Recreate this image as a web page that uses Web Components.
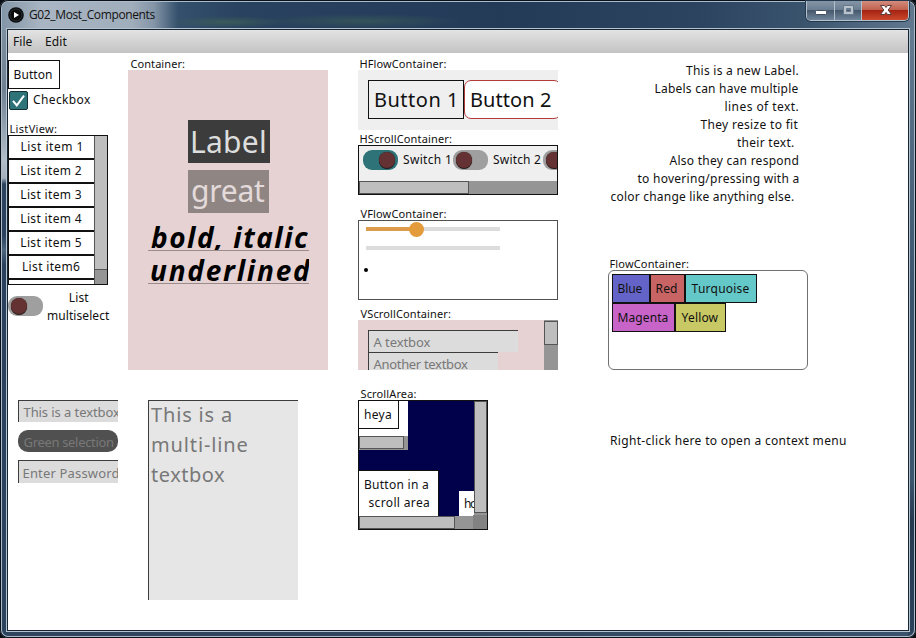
<!DOCTYPE html>
<html lang="en">
<head>
<meta charset="utf-8">
<title>G02_Most_Components</title>
<style>
html,body{margin:0;width:916px;height:638px;overflow:hidden;background:#0b0d14}
body{font-family:"Noto Sans","Open Sans",sans-serif;font-size:12px;color:#111}
.cols{display:grid;grid-template-columns:120px 230px 250px 300px;height:577px}
.col{display:flex;flex-direction:column;align-items:flex-start}
.row{display:flex;align-items:flex-start}
.center{display:flex;flex-direction:column;align-items:center}
.end{display:flex;flex-direction:column;align-items:flex-end}
.clip{overflow:hidden;box-sizing:border-box}
</style>
</head>
<body>
<ui-window>
  <ui-menubar slot="menu"><ui-text w="18.5">File</ui-text><ui-text w="21.5">Edit</ui-text></ui-menubar>
  <div class="cols">
    <div class="col" style="padding-top:7px">
      <ui-button style="width:52px;height:29px"><ui-text w="37.5">Button</ui-text></ui-button>
      <ui-checkbox style="margin:2px 0 0 1px"><ui-text w="58">Checkbox</ui-text></ui-checkbox>
      <ui-group label="ListView:" lw="46.5" style="margin-top:11px">
        <ui-list>
          <ui-text w="60">List item 1</ui-text><ui-text w="60.5">List item 2</ui-text><ui-text w="60.5">List item 3</ui-text><ui-text w="60.5">List item 4</ui-text><ui-text w="60.5">List item 5</ui-text><ui-text w="57">List item6</ui-text>
        </ui-list>
      </ui-group>
      <div class="row" style="margin-top:4px;gap:5px">
        <ui-switch style="margin-top:7px"></ui-switch>
        <div class="center" style="gap:1px"><ui-text w="19.5" style="margin-left:1px">List</ui-text><ui-text w="62">multiselect</ui-text></div>
      </div>
      <ui-textbox style="width:100px;height:22px;margin:76px 0 0 10px"><ui-text fs="13" w="96.5">This is a textbox</ui-text></ui-textbox>
      <ui-textbox dark style="width:100px;height:22px;margin:8px 0 0 10px"><ui-text fs="13" w="89.5">Green selection</ui-text></ui-textbox>
      <ui-textbox style="width:100px;height:23px;margin:8px 0 0 10px;padding-top:3px"><ui-text fs="13" w="95">Enter Password</ui-text></ui-textbox>
    </div>

    <div class="col" style="padding-top:3px">
      <ui-group label="Container:" lw="54.5">
        <div class="col clip" style="width:200px;height:300px;background:#e6d2d2;padding:50px 0 0 60px">
          <ui-label style="width:82px;background:#3c3c3c;color:#dcdedd"><ui-text fs="30" w="73">Label</ui-text></ui-label>
          <ui-label style="width:81px;background:#8f8684;color:#e4dada;margin-top:7px;padding-top:0"><ui-text fs="30" w="73">great</ui-text></ui-label>
          <ui-underline style="margin:5px 0 0 -40px"><ui-text fs="28" w="157">bold, italic</ui-text></ui-underline>
          <ui-underline style="margin-left:-40px"><ui-text fs="28" w="160">underlined</ui-text></ui-underline>
        </div>
      </ui-group>
      <ui-textbox style="width:150px;height:200px;margin:30px 0 0 20px;background:#e6e6e6;padding:0 0 0 2px">
        <div class="col" style="gap:3px"><ui-text fs="20" w="80">This is a</ui-text><ui-text fs="20" w="95.5" style="margin-left:1px">multi-line</ui-text><ui-text fs="20" w="74">textbox</ui-text></div>
      </ui-textbox>
    </div>

    <div class="col" style="padding-top:3px">
      <ui-group label="HFlowContainer:" lw="86">
        <div class="row clip" style="width:200px;height:60px;background:#efefef;padding:10px 0 0 10px">
          <ui-button style="width:96px;height:39px;flex:none;background:transparent;padding:5px 0 0 6px"><ui-text fs="20" w="80">Button 1</ui-text></ui-button>
          <ui-button style="width:97px;height:39px;flex:none;padding:5px 0 0 6px;border-color:#b23b3b;border-radius:7px"><ui-text fs="20" w="80">Button 2</ui-text></ui-button>
        </div>
      </ui-group>
      <ui-group label="HScrollContainer:" lw="91.5" style="margin-top:1px">
        <div class="col clip" style="width:200px;height:50px;background:#efefef;border:1px solid #111">
          <div class="row" style="height:31px;margin-top:4px;margin-left:4px">
            <ui-switch on></ui-switch><ui-text w="47" style="margin:1px 3px 0 5px">Switch 1</ui-text>
            <ui-switch></ui-switch><ui-text w="48" style="margin:1px 2px 0 5px">Switch 2</ui-text>
            <ui-switch></ui-switch>
          </div>
          <ui-scrollbar style="width:198px;height:13px;--w:108px;--h:11px"></ui-scrollbar>
        </div>
      </ui-group>
      <ui-group label="VFlowContainer:" lw="86" style="margin-top:11px">
        <div class="col clip" style="width:200px;height:80px;border:1px solid #505050;padding-left:7px">
          <ui-slider style="--v:50px"></ui-slider>
          <ui-slider empty style="margin-top:3px"></ui-slider>
          <div style="width:4px;height:4px;border-radius:2px;background:#000;margin:12px 0 0 -2px"></div>
        </div>
      </ui-group>
      <ui-group label="VScrollContainer:" lw="90.5" style="margin-top:6px">
        <div class="row clip" style="width:200px;height:50px;background:#e6d2d2">
          <div class="col" style="width:186px;padding:10px 0 0 10px;box-sizing:border-box">
            <ui-textbox style="width:150px;height:22px"><ui-text fs="13" w="57">A textbox</ui-text></ui-textbox>
            <ui-textbox style="width:130px;height:22px"><ui-text fs="13" w="94.5">Another textbox</ui-text></ui-textbox>
          </div>
          <ui-scrollbar style="width:14px;height:50px;padding-top:1px;--w:12px;--h:22px"></ui-scrollbar>
        </div>
      </ui-group>
      <ui-group label="ScrollArea:" lw="56" style="margin-top:16px">
        <ui-scrollarea>
          <div class="col clip" style="width:49px;height:49px;background:#fff">
            <div class="clip" style="width:40px;height:28px;flex:none;border:solid #111;border-width:0 1px 1px 0;padding:5px 0 0 6px;margin-bottom:7px"><ui-text w="26">heya</ui-text></div>
            <ui-scrollbar style="width:49px;height:14px;--w:43px;--h:11px"></ui-scrollbar>
          </div>
          <div class="row" style="justify-content:space-between;margin-top:20px">
            <div class="col clip" style="width:80px;height:46px;background:#fff;border-right:1px solid #111;border-top:1px solid #111;padding:5px 0 0 6px;gap:1px">
              <ui-text w="63">Button in a</ui-text><ui-text w="60.5" style="margin-left:3.5px">scroll area</ui-text>
            </div>
            <div class="clip" style="width:15px;height:25px;background:#fff;margin-top:21px;padding:4px 0 0 6px"><ui-text w="21">hoya</ui-text></div>
          </div>
        </ui-scrollarea>
      </ui-group>
    </div>

    <div class="col" style="padding-top:9px">
      <div class="end" style="width:190.5px;gap:1px">
        <ui-text w="112.5">This is a new Label.</ui-text>
        <ui-text w="143">Labels can have multiple</ui-text>
        <ui-text w="73">lines of text.</ui-text>
        <ui-text w="98">They resize to fit</ui-text>
        <ui-text w="57" style="margin-right:4.500px">their text.</ui-text>
        <ui-text w="129">Also they can respond</ui-text>
        <ui-text w="161">to hovering/pressing with a</ui-text>
        <ui-text w="183.5" style="margin-right:4.500px">color change like anything else.</ui-text>
      </div>
      <ui-group label="FlowContainer:" lw="78.5" style="margin-top:51px">
        <div class="row clip" style="width:200px;height:100px;border:1px solid #707070;border-radius:6px;padding:3px;flex-wrap:wrap;align-content:flex-start">
          <ui-button style="width:38px;height:29px;background:#6464c8"><ui-text w="24">Blue</ui-text></ui-button>
          <ui-button style="width:35px;height:29px;background:#c86464"><ui-text w="20.5">Red</ui-text></ui-button>
          <ui-button style="width:72px;height:29px;background:#64c8c8"><ui-text w="58">Turquoise</ui-text></ui-button>
          <ui-button style="width:63px;height:29px;background:#c864c8"><ui-text w="49">Magenta</ui-text></ui-button>
          <ui-button style="width:51px;height:29px;background:#c8c864"><ui-text w="37">Yellow</ui-text></ui-button>
        </div>
      </ui-group>
      <ui-text w="235" style="margin:62px 0 0 3px">Right-click here to open a context menu</ui-text>
    </div>
  </div>
</ui-window>

<script>
const define = (name, html, init) => customElements.define(name, class extends HTMLElement {
  connectedCallback() {
    if (this.shadowRoot) return;
    const t = document.createElement('template');
    t.innerHTML = html;
    this.attachShadow({mode: 'open'}).append(t.content.cloneNode(true));
    if (init) init(this, this.shadowRoot);
  }
});

define('ui-group', `<style>:host{display:block;flex:none}.l{height:14px;padding-left:2.5px}</style><div class="l"></div><slot></slot>`, (el, root) => {
  const t = document.createElement('ui-text');
  t.setAttribute('fs', 11);
  t.setAttribute('w', el.getAttribute('lw'));
  t.textContent = el.getAttribute('label');
  root.querySelector('.l').append(t);
});

define('ui-button', `<style>:host{display:block;box-sizing:border-box;border:1px solid #111;background:#fff;padding:5px 0 0 5.6px;color:#111}</style><slot></slot>`);

define('ui-checkbox', `<style>:host{display:flex;gap:5px}i{width:19px;height:19px;box-sizing:border-box;border:1px solid #142f33;border-radius:2px;background:#2d7378}svg{display:block}</style>
<i><svg width="17" height="17" viewBox="0 0 17 17"><path d="M3 8.800 L6.8 13.400 L14 3.600" fill="none" stroke="#fff" stroke-width="2"/></svg></i><slot></slot>`);

define('ui-scrollbar', `<style>:host{display:block;flex:none;box-sizing:border-box;background:#959595}i{display:block;box-sizing:content-box;width:var(--w);height:var(--h);background:#bebebe;border:1px solid #555}</style><i></i>`);

define('ui-list', `<style>:host{display:flex;box-sizing:border-box;width:100px;height:150px;border:1px solid #111;overflow:hidden}
.items{width:85px;flex:none}.it{height:24px;box-sizing:border-box;border-bottom:2px solid #111;display:flex;justify-content:center;padding-top:2px}
.b{width:13px;height:148px;background:#959595;border-left:1px solid #555}.b i{display:block;height:133px;background:#bebebe;border-bottom:1px solid #555}</style>
<div class="items"></div><div class="b"><i></i></div>`, (el, root) => {
  const box = root.querySelector('.items');
  [...el.children].forEach(c => {
    const d = document.createElement('div');
    d.className = 'it';
    d.append(c);
    box.append(d);
  });
});

define('ui-switch', `<style>:host{display:block;flex:none;width:35px;height:20px;border-radius:9px;background:#a09f9f}
:host([on]){background:#2d7378}i{display:block;box-sizing:border-box;width:16px;height:16px;border-radius:50%;background:#643232;box-shadow:0 1px 0 #231818,0 0 1px #231818;transform:translate(3px,2px)}:host([on]) i{transform:translate(16px,2px)}</style><i></i>`);

define('ui-slider', `<style>:host{display:flex;align-items:center;width:134px;height:16px}.a{width:var(--v,0px);height:4px;background:#dc9c4b}.b{flex:1;height:4px;background:#dcdcdc}
.k{width:15px;height:15px;border-radius:50%;background:#e39b3c;margin:0 -7.5px;position:relative}:host([empty]) .k{display:none}</style><div class="a"></div><div class="k"></div><div class="b"></div>`);

define('ui-textbox', `<style>:host{display:block;box-sizing:border-box;overflow:hidden;background:#dcdcdc;border:solid #3c3c3c;border-width:1px 0 0 1px;padding:2px 0 0 4.5px;color:#787878}
:host([dark]){background:#505050;border-color:#505050;border-radius:10px}</style><slot></slot>`);

define('ui-label', `<style>:host{display:block;box-sizing:border-box;height:43px;padding:1px 0 0 4px}</style><slot></slot>`);

define('ui-underline', `<style>:host{display:block;box-sizing:border-box;width:161px;height:33px;overflow:hidden;border-bottom:1px solid #9b8c8c;padding-left:3px;font-weight:bold;font-style:italic;color:#000}</style><slot></slot>`);

define('ui-scrollarea', `<style>:host{display:grid;box-sizing:border-box;width:130px;height:130px;border:1px solid #111;grid-template-columns:115px 13px;grid-template-rows:115px 13px;background:#00004b}
.v{overflow:hidden}.c{background:#828282;margin:-1px 0 0 -1px}</style>
<div class="v"><slot></slot></div><ui-scrollbar style="height:115px;--w:11px;--h:110px"></ui-scrollbar><ui-scrollbar style="--w:94px;--h:11px"></ui-scrollbar><div class="c"></div>`);

define('ui-menubar', `<style>:host{display:flex;gap:13.5px;height:23px;box-sizing:border-box;padding:3px 0 0 6px;background:linear-gradient(#e3e3e3,#c3c3c3)}</style><slot></slot>`);

define('ui-window', `<style>
:host{display:grid;grid-template-rows:30px 600px;box-sizing:border-box;width:916px;height:638px;padding:0 8px 8px;border-radius:8px;overflow:hidden;
background:linear-gradient(#8595a5 0,#6f8193 90px,#b4bec8 160px,#a3afbb 178px,#2d435e 184px,#2b415d 235px,#4c647c 250px,#2b415d 265px,#2d435e 100%) 0 0/8px 100% no-repeat,
linear-gradient(#6f8498 0,#5f768c 60px,#3a526c 300px,#3c546d 480px,#26394f 520px,#2c435c 100%) 100% 0/8px 100% no-repeat,
linear-gradient(90deg,#31465e 0 50%,#3a526c 100%);
box-shadow:inset 0 0 0 1px #0c1018,inset 0 0 0 2px #a9bccb}
:host::before{content:none}
.title{display:flex;align-items:flex-start;margin:2px -6px 0;height:28px;padding-left:6px;border-radius:6px 6px 0 0;
background:radial-gradient(ellipse 60px 6px at 225px 20px,#3d6058cc,transparent),radial-gradient(ellipse 100px 7px at 360px 19px,#3d605899,transparent),linear-gradient(90deg,#8396a8 0,#a9b5c2 40px,#a0adbb 130px,#8495a7 152px,#34506c 176px,#29425f 240px,#243b58 500px,#2c4460 700px,#3a536d 800px,#61788f 100%)}
.logo{margin-top:5px;flex:none}
.name{margin:4px 0 0 5px;font-family:"Open Sans",sans-serif;flex:1}
.ctl{display:flex;margin:-1px 5px 0 0;height:19px;border:1px solid #b5c2ce;border-top:0;border-radius:0 0 5px 5px;overflow:hidden;box-shadow:0 0 0 1px #24384e}
.ctl svg{display:block}.ctl div{background:linear-gradient(#8495a6,#6a7d91 48%,#46586c 50%,#71869b);border-right:1px solid #b3c0cc}
.ctl .x{background:linear-gradient(#d28c7d,#c05f4d 48%,#a52312 50%,#cb4a2c);border:0}
.client{background:#fff;box-shadow:0 0 0 1px #172431,0 0 0 2px #b3c3d0;position:relative}
</style>
<div class="title">
 <svg class="logo" width="16" height="16" viewBox="0 0 16 16"><circle cx="8" cy="8" r="7.8" fill="#0b0c0e"/><circle cx="8" cy="8" r="6" fill="none" stroke="#292d30" stroke-width="1"/><path d="M6 5 L11 8 L6 11Z" fill="#fff"/></svg>
 <div class="name"><ui-text w="126.5">G02_Most_Components</ui-text></div>
 <div class="ctl"><div><svg width="27" height="19"><rect x="8.5" y="9.5" width="11" height="4" rx="1" fill="#fff" stroke="#444f61"/></svg></div>
 <div><svg width="26" height="19"><path d="M8.5 4.5h10v9h-10z M11.5 7.5v3h4v-3z" fill="#b8c2cb" fill-rule="evenodd" stroke="#67798c"/></svg></div>
 <div class="x"><svg width="46" height="19"><path d="M18.5 4.5h4l1.500 2 1.500-2h4l-3.300 4.500 3.300 4.500h-4l-1.500-2-1.500 2h-4l3.300-4.500z" fill="#fff" stroke="#5b3a3a"/></svg></div></div>
</div>
<div class="client"><slot name="menu"></slot><slot></slot></div>`);

// One line of text whose ink is spaced out to the width given in "w".
// Defined last, so that the inherited font of its container is known when it measures.
const ctx = document.createElement('canvas').getContext('2d');
define('ui-text', `<style>:host{display:block;flex:none;white-space:pre}span{display:block;width:max-content}</style><span><slot></slot></span>`, (el, root) => {
  const fs = +(el.getAttribute('fs') || 12), w = +el.getAttribute('w'), s = el.textContent;
  const cs = getComputedStyle(el);
  ctx.font = `${cs.fontStyle} ${cs.fontWeight} ${fs}px ${cs.fontFamily}`;
  const m = ctx.measureText(s), ink = m.actualBoundingBoxRight + m.actualBoundingBoxLeft;
  const lh = Math.round(1.069 * fs) + Math.round(.293 * fs);
  el.style.width = w + 'px';
  el.style.height = lh + 'px';
  root.querySelector('span').style.cssText = `font-size:${fs}px;line-height:${lh}px;letter-spacing:${(w - ink) / (s.length - 1)}px;margin-left:${m.actualBoundingBoxLeft}px`;
});
</script>
</body>
</html>
